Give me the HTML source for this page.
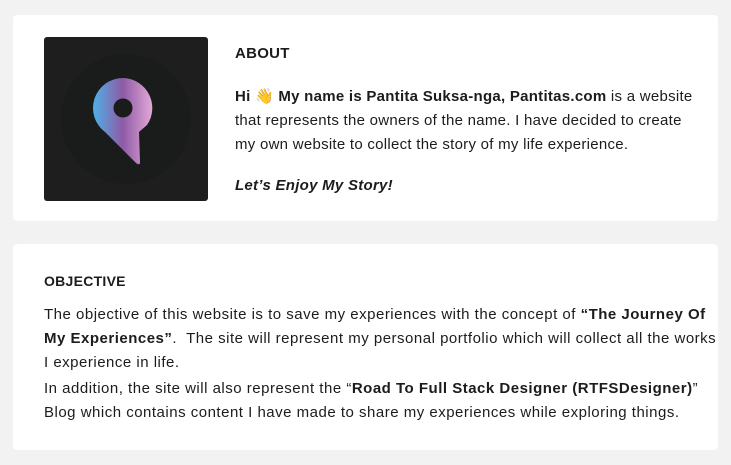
<!DOCTYPE html>
<html><head><meta charset="utf-8"><style>
html,body{margin:0;padding:0;background:#f2f2f2;width:731px;height:465px;overflow:hidden}
body{font-family:"Liberation Sans",sans-serif;color:#1c1c1c;font-size:15px;letter-spacing:0.27px}
.card{position:absolute;left:13px;width:705px;background:#fff;border-radius:4px}
.l{position:absolute;white-space:nowrap;line-height:24px}
.o{letter-spacing:0.5px}
b{font-weight:bold}
</style></head><body>
<div class="card" style="top:15px;height:206px"></div>
<div class="card" style="top:244px;height:206px"></div>
<svg style="position:absolute;left:44px;top:37px" width="164" height="164" viewBox="0 0 164 164">
<defs><linearGradient id="g" x1="0" x2="1"><stop offset="0" stop-color="#4fb0e6"/><stop offset="0.5" stop-color="#8e5aa6"/><stop offset="1" stop-color="#e2a9d6"/></linearGradient></defs>
<rect width="164" height="164" rx="3" fill="#1e1e1e"/>
<circle cx="82" cy="82" r="65" fill="#1a1b1b"/>
<path d="M79 41 A30 30 0 0 1 103 88 L95 95 L96 125 Q96 129 92 126 L61 95 A30 30 0 0 1 79 41 Z" fill="url(#g)"/>
<circle cx="79" cy="71" r="9.5" fill="#1a1b1b"/>
</svg>
<div class="l" style="left:235px;top:42px"><b>ABOUT</b></div>
<div class="l" style="left:235px;top:85px"><b>Hi 👋 My name is Pantita Suksa-nga, Pantitas.com</b> is a website</div>
<div class="l" style="left:235px;top:109px">that represents the owners of the name. I have decided to create</div>
<div class="l" style="left:235px;top:133px">my own website to collect the story of my life experience.</div>
<div class="l" style="left:235px;top:174px"><b><i>Let’s Enjoy My Story!</i></b></div>
<div class="l" style="left:44px;top:269px;font-size:14px"><b>OBJECTIVE</b></div>
<div class="l o" style="left:44px;top:303px">The objective of this website is to save my experiences with the concept of <b>“The Journey Of</b></div>
<div class="l o" style="left:44px;top:327px"><b>My Experiences”</b>.&nbsp; The site will represent my personal portfolio which will collect all the works</div>
<div class="l o" style="left:44px;top:351px">I experience in life.</div>
<div class="l o" style="left:44px;top:377px">In addition, the site will also represent the “<b>Road To Full Stack Designer (RTFSDesigner)</b>”</div>
<div class="l o" style="left:44px;top:401px">Blog which contains content I have made to share my experiences while exploring things.</div>
</body></html>
